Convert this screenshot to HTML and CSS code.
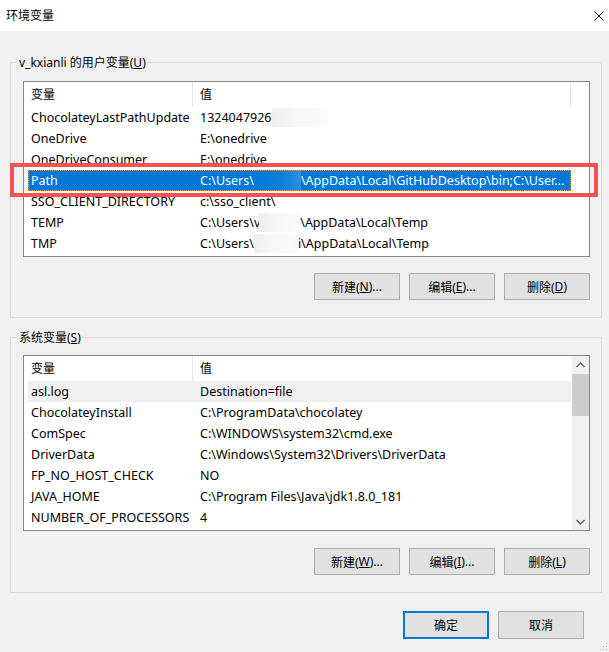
FILE: index.html
```html
<!DOCTYPE html>
<html lang="zh-CN">
<head>
<meta charset="utf-8">
<title>环境变量</title>
<link rel="stylesheet" href="styles.css">
</head>
<body>
<div class="window">
  <div class="titlebar">
    <span class="title">环境变量</span>
    <svg class="close" viewBox="0 0 10 10" width="10" height="10"><path d="M0.5 0.5 L9.5 9.5 M9.5 0.5 L0.5 9.5" stroke="#000" stroke-width="1" fill="none"/></svg>
  </div>
  <div class="content">
    <div class="group g1">
      <span class="legend">v_kxianli 的用户变量(<u>U</u>)</span>
      <div class="list">
        <div class="list-main">
          <div class="header">
            <div class="hcell k">变量</div>
            <div class="hcell v">值</div>
          </div>
          <div class="row"><span class="k">ChocolateyLastPathUpdate</span><span class="v">13240479269<span class="redact r1"></span></span></div>
          <div class="row"><span class="k">OneDrive</span><span class="v">E:\onedrive</span></div>
          <div class="row"><span class="k">OneDriveConsumer</span><span class="v">E:\onedrive</span></div>
          <div class="row sel"><span class="k">Path</span><span class="v">C:\Users\<span class="redact rb"></span>\AppData\Local\GitHubDesktop\bin;C:\User...</span></div>
          <div class="row"><span class="k">SSO_CLIENT_DIRECTORY</span><span class="v">c:\sso_client\</span></div>
          <div class="row"><span class="k">TEMP</span><span class="v">C:\Users\v<span class="redact r2"></span>\AppData\Local\Temp</span></div>
          <div class="row"><span class="k">TMP</span><span class="v">C:\Users\<span class="redact r3"></span>i\AppData\Local\Temp</span></div>
        </div>
      </div>
      <div class="buttons">
        <button class="btn">新建(<u>N</u>)...</button>
        <button class="btn">编辑(<u>E</u>)...</button>
        <button class="btn">删除(<u>D</u>)</button>
      </div>
    </div>
    <div class="group g2">
      <span class="legend">系统变量(<u>S</u>)</span>
      <div class="list">
        <div class="list-main">
          <div class="header">
            <div class="hcell k">变量</div>
            <div class="hcell v open">值</div>
          </div>
          <div class="row hl"><span class="k">asl.log</span><span class="v">Destination=file</span></div>
          <div class="row"><span class="k">ChocolateyInstall</span><span class="v">C:\ProgramData\chocolatey</span></div>
          <div class="row"><span class="k">ComSpec</span><span class="v">C:\WINDOWS\system32\cmd.exe</span></div>
          <div class="row"><span class="k">DriverData</span><span class="v">C:\Windows\System32\Drivers\DriverData</span></div>
          <div class="row"><span class="k">FP_NO_HOST_CHECK</span><span class="v">NO</span></div>
          <div class="row"><span class="k">JAVA_HOME</span><span class="v">C:\Program Files\Java\jdk1.8.0_181</span></div>
          <div class="row"><span class="k">NUMBER_OF_PROCESSORS</span><span class="v">4</span></div>
        </div>
        <div class="scrollbar">
          <div class="sb-btn"><svg width="9" height="6" viewBox="0 0 9 6"><path d="M0.5 5 L4.5 1 L8.5 5" stroke="#606060" stroke-width="1.4" fill="none"/></svg></div>
          <div class="sb-thumb"></div>
          <div class="sb-track"></div>
          <div class="sb-btn"><svg width="9" height="6" viewBox="0 0 9 6"><path d="M0.5 1 L4.5 5 L8.5 1" stroke="#606060" stroke-width="1.4" fill="none"/></svg></div>
        </div>
      </div>
      <div class="buttons">
        <button class="btn">新建(<u>W</u>)...</button>
        <button class="btn">编辑(<u>I</u>)...</button>
        <button class="btn">删除(<u>L</u>)</button>
      </div>
    </div>
    <div class="dialog-buttons">
      <button class="btn big default">确定</button>
      <button class="btn big">取消</button>
    </div>
  </div>
  <div class="annot"></div>
  <svg class="grip" width="8" height="8" viewBox="0 0 8 8">
    <rect x="6" y="0" width="1" height="1" fill="#c4c4c4"/>
    <rect x="3" y="3" width="1" height="1" fill="#c4c4c4"/>
    <rect x="6" y="3" width="1" height="1" fill="#c4c4c4"/>
    <rect x="0" y="6" width="1" height="1" fill="#c4c4c4"/>
    <rect x="3" y="6" width="1" height="1" fill="#c4c4c4"/>
    <rect x="6" y="6" width="1" height="1" fill="#c4c4c4"/>
  </svg>
</div>
</body>
</html>
```
FILE: styles.css
```css
* { box-sizing: border-box; }
html, body { margin: 0; padding: 0; }
body {
  background: #f0f0f0;
  font-family: "Noto Sans", "Noto Sans CJK SC", sans-serif;
  font-size: 12px;
  color: #000;
}
.window {
  width: 609px;
  height: 652px;
  position: relative;
  overflow: hidden;
  background: #f0f0f0;
}
.titlebar {
  height: 31px;
  background: #fff;
  display: flex;
  align-items: center;
  justify-content: space-between;
  padding: 0 5px 0 6px;
}
.title { line-height: 16px; }
.close { display: block; }
.content { padding: 31px 7px 0 10px; }
.group {
  position: relative;
  border: 1px solid #dcdcdc;
  padding: 18px 11px 17px 12px;
}
.group.g2 { margin-top: 19px; padding-top: 17px; }
.legend {
  position: absolute;
  top: -8px;
  left: 6px;
  padding: 0 2px;
  line-height: 16px;
  background: #f0f0f0;
  white-space: nowrap;
}
.list {
  height: 176px;
  border: 1px solid #828790;
  background: #fff;
  display: flex;
  overflow: hidden;
}
.list-main { flex: 1; min-width: 0; }
.header { display: flex; height: 25px; }
.hcell {
  line-height: 25px;
  padding-left: 7px;
  border-right: 1px solid #e5e5e5;
}
.hcell.k { width: 169px; }
.hcell.v { width: 378px; }
.hcell.open { border-right: none; }
.row {
  display: grid;
  grid-template-columns: 165px 1fr;
  height: 21px;
  line-height: 21px;
  margin-left: 4px;
  width: 543px;
  white-space: nowrap;
  font-size: 12.5px;
}
.row .k { padding-left: 3px; overflow: hidden; }
.row .v { padding-left: 7px; overflow: hidden; }
.row.sel {
  background: #0078d7;
  color: #fff;
  outline: 1px dotted #f29b38;
  outline-offset: -1px;
}
.row.hl { background: #f0f0f0; }
.redact {
  display: inline-block;
  vertical-align: top;
  height: 19px;
  margin-top: 1px;
  background: linear-gradient(to right, #efefef, #f7f7f7 40%, #fbfbfb);
}
.redact.r1 { width: 56px; margin-left: -7px; }
.redact.r2 { width: 41px; margin-left: -1px; }
.redact.r3 { width: 44px; }
.redact.rb {
  width: 47px;
  height: 21px;
  margin-top: 0;
  background: linear-gradient(to right, #0078d7, #0b7fd9 60%, #2a8fe0);
}
.scrollbar {
  width: 17px;
  background: #f0f0f0;
  display: flex;
  flex-direction: column;
}
.sb-btn {
  height: 17px;
  display: flex;
  align-items: center;
  justify-content: center;
}
.sb-btn svg { display: block; }
.sb-thumb { height: 42px; margin-top: 1px; background: #cdcdcd; }
.sb-track { flex: 1; }
.buttons {
  display: flex;
  justify-content: flex-end;
  gap: 9px;
  margin-top: 16px;
}
.group.g2 .buttons { margin-top: 17px; }
.btn {
  width: 86px;
  height: 27px;
  margin: 0;
  padding: 0;
  background: #e1e1e1;
  border: 1px solid #adadad;
  border-radius: 0;
  font: inherit;
  color: #000;
  display: flex;
  align-items: center;
  justify-content: center;
}
.btn.big { height: 28px; }
.btn.default { border: 2px solid #0078d7; }
.dialog-buttons {
  display: flex;
  justify-content: flex-end;
  gap: 9px;
  margin-top: 18px;
  padding-right: 18px;
}
.annot {
  position: absolute;
  left: 10px;
  top: 163px;
  width: 588px;
  height: 34px;
  border: 4px solid #f05454;
}
.grip {
  position: absolute;
  right: 1px;
  bottom: 1px;
}
```
